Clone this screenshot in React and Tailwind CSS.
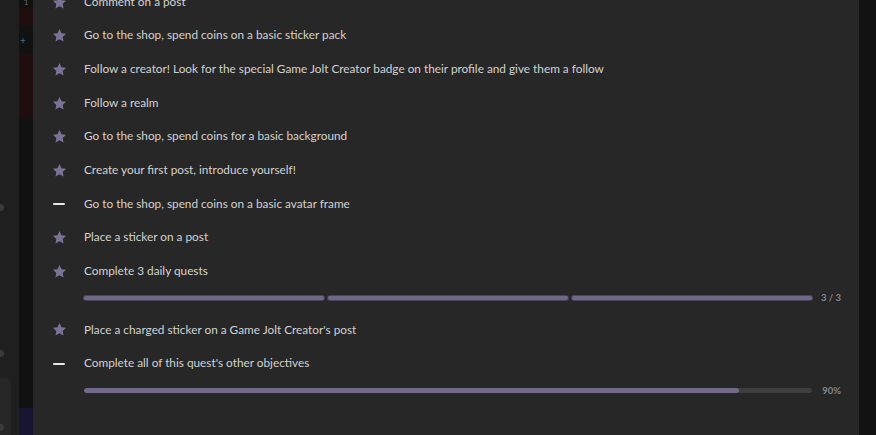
import React from "react";

const Star = () => (
  <svg width="15" height="15" viewBox="0 0 24 24" className="block">
    <path
      d="M12 1.5l3.2 6.7 7.3.9-5.4 5.1 1.4 7.3L12 18l-6.5 3.5 1.4-7.3-5.4-5.1 7.3-.9z"
      fill="#7b7296"
    />
  </svg>
);

const Dash = () => <div className="w-[12px] h-[2px] bg-[#e6e6e6] rounded-[1px]" />;

const items = [
  { t: "Comment on a post", i: "star" },
  { t: "Go to the shop, spend coins on a basic sticker pack", i: "star" },
  { t: "Follow a creator! Look for the special Game Jolt Creator badge on their profile and give them a follow", i: "star" },
  { t: "Follow a realm", i: "star" },
  { t: "Go to the shop, spend coins for a basic background", i: "star" },
  { t: "Create your first post, introduce yourself!", i: "star" },
  { t: "Go to the shop, spend coins on a basic avatar frame", i: "dash" },
  { t: "Place a sticker on a post", i: "star" },
  { t: "Complete 3 daily quests", i: "star", bar: "seg" },
  { t: "Place a charged sticker on a Game Jolt Creator's post", i: "star" },
  { t: "Complete all of this quest's other objectives", i: "dash", bar: "pct" },
];

function Row({ t, i }) {
  return (
    <div className="h-[33.67px] flex items-center">
      <div className="w-[51px] flex justify-center pl-[1px] -mt-[2px]">{i === "star" ? <Star /> : <Dash />}</div>
      <div className="text-[11.8px] text-[#d2d2d2] leading-none -mt-[3px]">{t}</div>
    </div>
  );
}

function SegBar() {
  return (
    <div className="h-[25px] flex items-start pt-[7px] pr-[18px]">
      <div className="flex-1 flex gap-[4px] ml-[51px]">
        <div className="flex-1 h-[4px] rounded-full bg-[#716887] shadow-[0_0_0_1px_#4a4558]" />
        <div className="flex-1 h-[4px] rounded-full bg-[#716887] shadow-[0_0_0_1px_#4a4558]" />
        <div className="flex-1 h-[4px] rounded-full bg-[#716887] shadow-[0_0_0_1px_#4a4558]" />
      </div>
      <div className="w-[29px] text-right text-[9.5px] font-bold text-[#858585] leading-[4px]">3 / 3</div>
    </div>
  );
}

function PctBar() {
  return (
    <div className="h-[25px] flex items-start pt-[7px] pr-[18px]">
      <div className="flex-1 ml-[51px] h-[5px] rounded-full bg-[#3e3e3e] overflow-hidden">
        <div className="h-full w-[90%] rounded-full bg-[#736a8a]" />
      </div>
      <div className="w-[29px] text-right text-[9.5px] font-bold text-[#858585] leading-[5px]">90%</div>
    </div>
  );
}

export default function App() {
  return (
    <div className="w-[876px] h-[435px] overflow-hidden flex bg-[#1f1f1f]" style={{ fontFamily: "Lato, 'Noto Sans', sans-serif" }}>
      <div className="w-[19px] relative flex-none bg-[#1f1f1f]">
        <div className="absolute left-0 top-[204px] w-[4px] h-[7px] rounded-r bg-[#3a3a3a]" />
        <div className="absolute left-0 top-[350px] w-[4px] h-[7px] rounded-r bg-[#3a3a3a]" />
        <div className="absolute left-0 top-[378px] w-[11px] h-[60px] rounded-r-[5px] bg-[#262626]" />
        <div className="absolute left-0 top-[424px] w-[4px] h-[7px] rounded-r bg-[#3a3a3a]" />
      </div>
      <div className="w-[14px] flex-none bg-[#111111] flex flex-col">
        <div className="h-[10px] flex justify-center text-[8px] text-[#666] leading-none -mt-[2px]">1</div>
        <div className="h-[18px] bg-[#200d0d]" />
        <div className="h-[27px] flex items-center text-[10px] text-[#777] leading-none pl-[1px]">+</div>
        <div className="h-[65px] bg-[#200d0d]" />
        <div className="flex-1" />
        <div className="h-[27px] bg-[#181530]" />
      </div>
      <div className="w-[826px] flex-none bg-[#272727]">
        <div className="mt-[-13.8px]">
          {items.map((it, k) => (
            <React.Fragment key={k}>
              <Row {...it} />
              {it.bar === "seg" && <SegBar />}
              {it.bar === "pct" && <PctBar />}
            </React.Fragment>
          ))}
        </div>
      </div>
      <div className="flex-1 bg-[#121212]" />
    </div>
  );
}
